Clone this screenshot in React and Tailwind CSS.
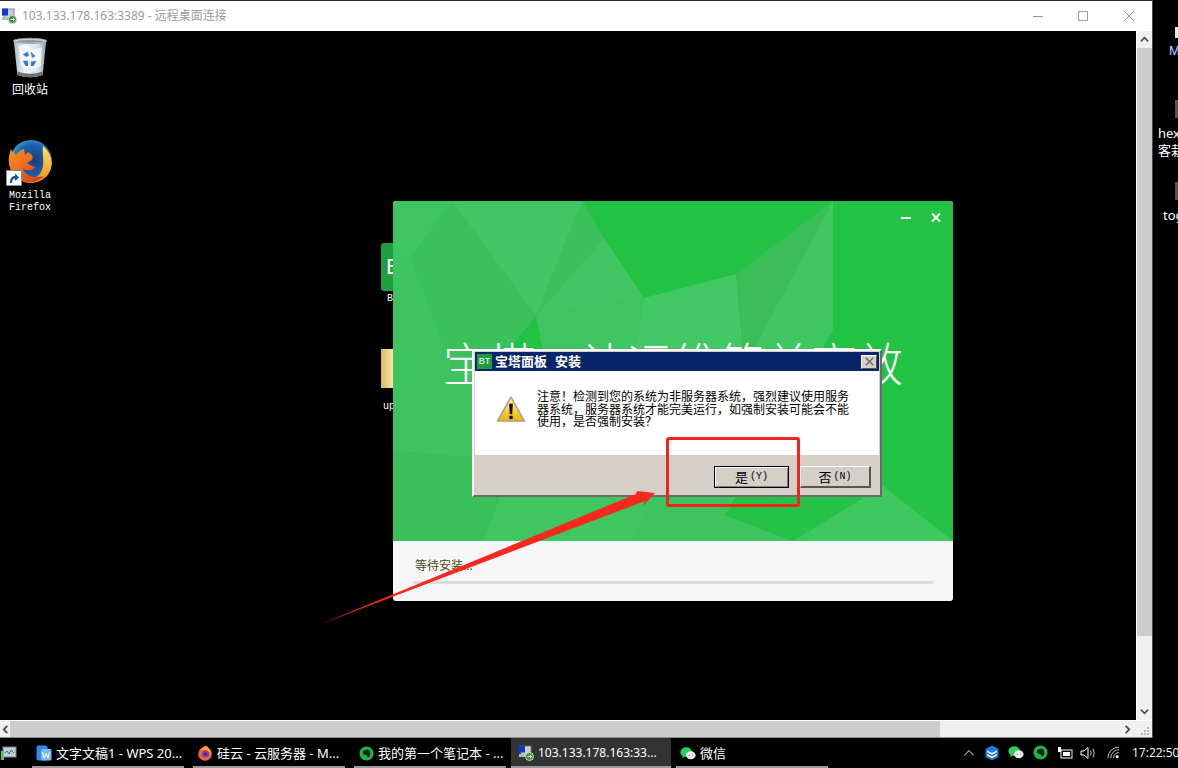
import React from "react";

const cjk = "font-['Noto_Sans','Noto_Sans_CJK_SC',sans-serif]";

const RdpIcon = ({ className }) => (
  <svg viewBox="0 0 16 16" className={className}>
    <rect x="3" y="1" width="10" height="9" fill="#c9ced6" stroke="#6f7680" strokeWidth="0.8" />
    <rect x="1" y="0.5" width="6" height="7" fill="#1238c8" />
    <rect x="1" y="9" width="9" height="3" fill="#b4bac2" />
    <circle cx="11.5" cy="11.5" r="4" fill="#3d8f3d" stroke="#d9e8d9" strokeWidth="0.8" />
    <path d="M9.5 11.5h4M12 10l1.5 1.5L12 13" stroke="#fff" strokeWidth="0.8" fill="none" />
  </svg>
);

const RecycleBin = () => (
  <svg viewBox="0 0 40 48" className="w-[36px] h-[44px]">
    <defs>
      <linearGradient id="binBody" x1="0" x2="1" y1="0" y2="0">
        <stop offset="0" stopColor="#a9bac4" />
        <stop offset="0.35" stopColor="#eef4f7" />
        <stop offset="0.75" stopColor="#d8e3ea" />
        <stop offset="1" stopColor="#8fa1ab" />
      </linearGradient>
    </defs>
    <path d="M2 5 L6 43 Q20 48 34 43 L38 5 Z" fill="url(#binBody)" />
    <ellipse cx="20" cy="5" rx="18.5" ry="3" fill="#c7d2d9" stroke="#8d9aa2" strokeWidth="0.8" />
    <ellipse cx="20" cy="5.5" rx="15" ry="1.5" fill="#8795a0" />
    <path d="M7 11 L15 9 L24 15 L33 12 L32 33 L22 37 L10 33 Z" fill="#f6fafc" opacity="0.8" />
    <path d="M12 20 l5 -3 l2 4 l-3 2 Z M21 17 l5 5 l-4 2 Z M12 27 l6 0 l0 6 l-3 0 Z M21 28 l6 -1 l-3 6 l-3 0 Z" fill="#3a78d8" />
    <path d="M6 39 Q20 44 34 39 L34 43 Q20 48 6 43 Z" fill="#6b7378" />
  </svg>
);

const Firefox = () => (
  <svg viewBox="0 0 44 44" className="w-[44px] h-[44px]">
    <defs>
      <radialGradient id="ffGlobe" cx="0.55" cy="0.5" r="0.6">
        <stop offset="0" stopColor="#173a86" />
        <stop offset="0.65" stopColor="#1c62aa" />
        <stop offset="1" stopColor="#46b1dc" />
      </radialGradient>
      <linearGradient id="ffFox" x1="0" x2="1" y1="0" y2="1">
        <stop offset="0" stopColor="#f8981f" />
        <stop offset="0.6" stopColor="#ea5c1a" />
        <stop offset="1" stopColor="#c9321c" />
      </linearGradient>
      <linearGradient id="ffTail" x1="0" x2="0" y1="0" y2="1">
        <stop offset="0" stopColor="#ffe65a" />
        <stop offset="1" stopColor="#f28a1d" />
      </linearGradient>
    </defs>
    <circle cx="23" cy="21" r="21" fill="url(#ffGlobe)" />
    <path d="M35 6 C44 13 47 27 39 36 C32 43 22 45 14 41 C25 42 34 35 35 26 C36 18 34 12 35 6 Z" fill="url(#ffTail)" />
    <path d="M3 9 C0 17 -1 27 6 35 C13 44 28 45 36 36 C27 39 17 36 15 29 C19 31 25 31 27 27 C23 26 20 24 19 22 C23 22 26 19 24 15 L20 12 L17 15 L16 9 C12 10 9 13 8 15 C7 13 4 12 3 9 Z" fill="url(#ffFox)" />
  </svg>
);

const ShortcutBadge = () => (
  <div className="absolute left-[-2px] top-[30px] w-[16px] h-[16px] bg-white border border-[#8a8a8a] flex items-center justify-center">
    <svg viewBox="0 0 12 12" className="w-[12px] h-[12px]">
      <path d="M2 11 C2 6 4 4 7 4 L7 1.5 L11 5.5 L7 9 L7 6.5 C5 6.5 4 8 4 11 Z" fill="#1b4f9c" />
    </svg>
  </div>
);

const WarningIcon = () => (
  <svg viewBox="0 0 30 28" className="w-[30px] h-[27px]">
    <defs>
      <linearGradient id="warnFill" x1="0" x2="0" y1="0" y2="1">
        <stop offset="0" stopColor="#fff3a0" />
        <stop offset="1" stopColor="#f0b400" />
      </linearGradient>
    </defs>
    <path d="M15 1 L29 26 H1 Z" fill="url(#warnFill)" stroke="#9a9a9a" strokeWidth="1.4" strokeLinejoin="round" />
    <path d="M13 8 h4 l-0.8 11 h-2.4 Z" fill="#111" />
    <rect x="13.3" y="20.5" width="3.4" height="3.4" fill="#111" />
  </svg>
);

const WpsIcon = () => (
  <svg viewBox="0 0 16 16" className="w-[16px] h-[16px]">
    <rect x="0.5" y="0.5" width="11" height="15" rx="2" fill="#2f8bf0" />
    <rect x="5" y="4" width="10.5" height="11.5" rx="1.5" fill="#7ab8f7" />
    <path d="M6.5 7 l1.5 6 l2 -4.5 l2 4.5 l1.5 -6" stroke="#fff" strokeWidth="1" fill="none" />
  </svg>
);

const FirefoxSmall = () => (
  <svg viewBox="0 0 16 16" className="w-[16px] h-[16px]">
    <circle cx="8" cy="9" r="6.8" fill="#f0642e" />
    <path d="M3 5 C5 2 9 1 9 0.5 C12 3 14 5 14.8 9 C11 5 7 4 3 5 Z" fill="#ffa02a" />
    <circle cx="8.5" cy="9" r="3.6" fill="#7a3bc8" />
    <circle cx="8.5" cy="9" r="1.6" fill="#3a2a8c" />
  </svg>
);

const EvernoteIcon = ({ className }) => (
  <svg viewBox="0 0 16 16" className={className}>
    <circle cx="8" cy="8" r="7.5" fill="#1fb83f" />
    <path d="M5 5 L8 3.8 C11 3.8 12 5 12 8 C12 11 11 12 9.5 12 C8 12 8 10.5 9.5 10.5 L7 9.5 C5 9.5 4 8 4 6 Z" fill="#16241a" />
  </svg>
);

const WechatIcon = ({ className }) => (
  <svg viewBox="0 0 18 16" className={className}>
    <ellipse cx="7" cy="6.5" rx="6.5" ry="5.5" fill="#2bd15c" />
    <path d="M3 10 L2.5 13 L6 11 Z" fill="#2bd15c" />
    <ellipse cx="12.2" cy="10" rx="5.3" ry="4.5" fill="#f1f1f1" />
    <circle cx="10.5" cy="10" r="0.8" fill="#999" />
    <circle cx="14" cy="10" r="0.8" fill="#999" />
  </svg>
);

const BoxIcon = () => (
  <svg viewBox="0 0 16 18" className="w-[14px] h-[16px]">
    <path d="M8 0.5 L15.5 4.5 V13.5 L8 17.5 L0.5 13.5 V4.5 Z" fill="#1f7be0" />
    <path d="M2.5 6 L8 9 L13.5 6 L13.5 8 L8 11 L2.5 8 Z" fill="#fff" />
    <path d="M2.5 10 L8 13 L13.5 10 L13.5 12 L8 15 L2.5 12 Z" fill="#fff" />
  </svg>
);

const TaskItem = ({ icon, label, active, w = "w-[152px]", mr = "mr-[9px]", pl = "pl-[4px]", text = "text-[13px]" }) => (
  <div className={`${w} ${mr} ${pl} h-[30px] relative flex items-center gap-[4px] shrink-0 ${active ? "bg-[#333333]" : ""}`}>
    <span className="w-[16px] h-[16px] shrink-0 flex items-center justify-center">{icon}</span>
    <span className={`${cjk} ${text} leading-[18px] text-white whitespace-nowrap`}>{label}</span>
    <div className="absolute left-0 right-0 bottom-0 h-[2px] bg-[#9a9a9a]" />
  </div>
);

// low poly shards behind the installer title
const InstallerBackdrop = () => (
  <svg viewBox="0 0 560 340" className="absolute inset-0 w-full h-full" preserveAspectRatio="none">
    <rect width="560" height="340" fill="#22c245" />
    <polygon points="0,0 59,0 18,57 0,70" fill="#3fc560" />
    <polygon points="59,0 189,0 143,115" fill="#41c663" />
    <polygon points="189,0 211,37 143,115" fill="#3cc05b" />
    <polygon points="211,37 251,97 143,115" fill="#40c562" />
    <polygon points="59,0 143,115 114,150 60,170 18,57" fill="#3bc15b" />
    <polygon points="0,70 18,57 60,170 0,250" fill="#3ec45f" />
    <polygon points="143,115 251,97 243,150 150,150" fill="#3fc560" />
    <polygon points="251,97 343,73 350,150 300,210 243,150" fill="#42c865" />
    <polygon points="343,73 440,0 361,147 350,150" fill="#3bbd58" />
    <polygon points="440,0 440,129 361,147" fill="#3fc660" />
    <polygon points="60,170 114,150 150,150 120,260 0,250 0,250" fill="#3ec35e" />
    <polygon points="150,150 243,150 300,210 240,340 90,340 120,260" fill="#40c660" />
    <polygon points="0,250 120,260 90,340 0,340" fill="#39c059" />
    <polygon points="300,210 350,150 361,147 332,314 400,340 240,340" fill="#3ec45e" />
    <polygon points="361,147 440,129 332,314" fill="#3fc75f" />
    <polygon points="332,314 400,340 560,340 560,270 490,270" fill="#24c247" />
    <polygon points="400,340 490,285 560,340" fill="#3fc85f" />
  </svg>
);

const Installer = () => (
  <div className="absolute left-[393px] top-[201px] w-[560px] h-[400px] rounded-[3px] overflow-hidden bg-[#f6f6f6]">
    <div className="relative h-[340px] overflow-hidden">
      <InstallerBackdrop />
      <svg viewBox="0 0 50 14" className="absolute right-[10px] top-[11px] w-[50px] h-[14px]">
        <rect x="8" y="5" width="10" height="2" fill="#fff" />
        <path d="M39 1.5 L47 9.5 M47 1.5 L39 9.5" stroke="#fff" strokeWidth="2" />
      </svg>
      <div className={`${cjk} absolute left-[50px] top-[132px] text-[46px] leading-[60px] font-light text-white whitespace-nowrap`}>
        宝塔，让运维简单高效
      </div>
    </div>
    <div className="px-[20px] pt-[16px]">
      <div className={`${cjk} text-[12px] leading-[18px] text-[#4c4a12] pl-[2px]`}>等待安装...</div>
      <div className="h-[3px] bg-[#dcdcdc] mt-[6px]" />
    </div>
  </div>
);

const AlertButton = ({ label, hot, focused }) => (
  <div
    className={`${cjk} h-[22px] flex items-center justify-center text-[12px] text-black bg-[#d4d0c8] ${
      focused
        ? "w-[75px] border border-black shadow-[inset_1px_1px_0_#fff,inset_-1px_-1px_0_#808080]"
        : "w-[71px] border-t border-l border-white border-b-2 border-r-2 border-b-[#555555] border-r-[#555555]"
    }`}
  >
    <span className="text-[13px] leading-[16px]">{label}</span>
    <span className="font-['Liberation_Mono',monospace] text-[10px] leading-[16px] ml-[2px]">{hot}</span>
  </div>
);

const AlertDialog = () => (
  <div className="absolute left-[472px] top-[349px] w-[410px] h-[148px] bg-[#d4d0c8] border-2 border-t-white border-l-white border-r-[#6b6b6b] border-b-[#6b6b6b] p-[1px] flex flex-col">
    <div className="h-[19px] bg-[#0a246a] flex items-center pl-[2px] pr-[2px] shrink-0">
      <div className="w-[15px] h-[15px] bg-[#1f9e3f] text-white text-[9px] leading-[15px] text-center font-['Liberation_Sans',sans-serif]">BT</div>
      <span className={`${cjk} text-[13px] leading-[15px] font-bold text-white ml-[3px] whitespace-nowrap`}>宝塔面板</span>
      <span className={`${cjk} text-[13px] leading-[15px] font-bold text-white ml-[8px] whitespace-nowrap`}>安装</span>
      <div className="ml-auto w-[16px] h-[14px] bg-[#d4d0c8] border-t border-l border-white border-b border-r border-b-[#555555] border-r-[#555555] flex items-center justify-center">
        <svg viewBox="0 0 10 10" className="w-[9px] h-[9px]">
          <path d="M1 1 L9 9 M9 1 L1 9" stroke="#666" strokeWidth="1.5" />
        </svg>
      </div>
    </div>
    <div className="h-[84px] bg-white flex items-start pl-[21px] pt-[20px] shrink-0">
      <div className="pt-[5px] shrink-0"><WarningIcon /></div>
      <div className={`${cjk} ml-[11px] w-[316px] text-[12px] leading-[12.5px] text-black`}>
        注意！检测到您的系统为非服务器系统，强烈建议使用服务器系统，服务器系统才能完美运行，如强制安装可能会不能使用，是否强制安装？
      </div>
    </div>
    <div className="flex-1 flex items-start justify-end gap-[11px] pt-[11px] pr-[8px]">
      <AlertButton label="是" hot="(Y)" focused />
      <AlertButton label="否" hot="(N)" />
    </div>
  </div>
);

const Annotations = () => (
  <>
    <div className="absolute left-[666px] top-[437px] w-[134px] h-[70px] border-[3px] border-[#f5231c] rounded-[3px]" />
    <svg viewBox="0 0 1178 768" className="absolute inset-0 w-[1178px] h-[768px] pointer-events-none">
      <polygon points="321,624 636,494 637,491 655,493 643,506 645,501" fill="#f7291f" />
    </svg>
  </>
);

const DesktopIcons = () => (
  <>
    <div className="absolute left-0 top-[36px] w-[60px] flex flex-col items-center">
      <RecycleBin />
      <span className={`${cjk} text-[12px] leading-[16px] text-white mt-[2px]`}>回收站</span>
    </div>
    <div className="absolute left-[8px] top-[140px] w-[44px] h-[44px]">
      <Firefox />
      <ShortcutBadge />
    </div>
    <div className="absolute left-[9px] top-[190px] font-['Liberation_Mono',monospace] text-[10px] leading-[12px] text-white">
      Mozilla<br />Firefox
    </div>
    <div className="absolute left-[381px] top-[243px] w-[14px] h-[48px] bg-[#1f9e3f] rounded-l-[3px] overflow-hidden text-white text-[22px] leading-[48px] pl-[5px] font-['Liberation_Sans',sans-serif]">B</div>
    <div className="absolute left-[387px] top-[293px] text-[10px] leading-[12px] text-white font-['Liberation_Mono',monospace]">B</div>
    <div className="absolute left-[381px] top-[349px] w-[14px] h-[39px] bg-gradient-to-r from-[#d9b860] to-[#fff2b8]" />
    <div className="absolute left-[383px] top-[401px] text-[10px] leading-[12px] text-white font-['Liberation_Mono',monospace]">up</div>
  </>
);

const ScrollArrow = ({ d, className }) => (
  <svg viewBox="0 0 10 10" className={className}>
    <path d={d} stroke="#505050" strokeWidth="2" fill="none" />
  </svg>
);

const RdpWindow = () => (
  <div className="w-[1152px] h-[738px] flex flex-col bg-[#f0f0f0] shrink-0 border-t border-b border-t-[#2b2b2b] border-b-[#8a8a8a]">
    <div className="h-[30px] bg-white flex items-center shrink-0">
      <RdpIcon className="w-[16px] h-[16px] ml-[1px]" />
      <span className={`${cjk} text-[12px] leading-[16px] text-[#9b9b9b] ml-[5px] whitespace-nowrap`}>103.133.178.163:3389 - 远程桌面连接</span>
      <div className="ml-auto flex items-center h-full">
        <svg viewBox="0 0 150 30" className="w-[150px] h-[30px]">
          <path d="M31 15.5 H41" stroke="#9a9a9a" strokeWidth="1" />
          <rect x="76.5" y="10.5" width="9" height="9" fill="none" stroke="#9a9a9a" strokeWidth="1" />
          <path d="M122 10 L132 20 M132 10 L122 20" stroke="#9a9a9a" strokeWidth="1" />
        </svg>
      </div>
    </div>
    <div className="flex-1 flex min-h-0">
      <div className="flex-1 bg-black" />
      <div className="w-[16px] flex flex-col bg-[#f0f0f0] border-l border-white">
        <div className="h-[17px] flex items-center justify-center"><ScrollArrow d="M1 7 L5 3 L9 7" className="w-[9px] h-[9px]" /></div>
        <div className="h-[588px] bg-[#cdcdcd]" />
        <div className="flex-1" />
        <div className="h-[17px] flex items-center justify-center"><ScrollArrow d="M1 3 L5 7 L9 3" className="w-[9px] h-[9px]" /></div>
      </div>
    </div>
    <div className="h-[17px] flex bg-[#f0f0f0] border-t border-white shrink-0">
      <div className="w-[10px] flex items-center justify-center"><ScrollArrow d="M7 1 L3 5 L7 9" className="w-[9px] h-[9px]" /></div>
      <div className="w-[930px] bg-[#cdcdcd]" />
      <div className="flex-1" />
      <div className="w-[13px] flex items-center"><ScrollArrow d="M3 1 L7 5 L3 9" className="w-[9px] h-[9px]" /></div>
      <div className="w-[16px] flex items-end justify-end pb-[2px] pr-[3px]">
        <svg viewBox="0 0 8 8" className="w-[8px] h-[8px]">
          <path d="M6 0h2v2h-2zM3 3h2v2h-2zM6 3h2v2h-2zM0 6h2v2h-2zM3 6h2v2h-2zM6 6h2v2h-2z" fill="#b8b8b8" />
        </svg>
      </div>
    </div>
  </div>
);

const SideStrip = () => (
  <div className="flex-1 relative bg-black overflow-hidden border-l border-[#4a4a4a]">
    <div className="absolute left-[22px] top-[27px] w-[6px] h-[11px] bg-[#e8e8e8]" />
    <div className="absolute left-[16px] top-[43px] font-['Liberation_Sans',sans-serif] text-[13px] leading-[16px] text-[#b9d4ff]">M</div>
    <div className="absolute left-[22px] top-[100px] w-[6px] h-[18px] bg-[#555555]" />
    <div className={`${cjk} absolute left-[5px] top-[125px] text-[13px] leading-[16px] text-white whitespace-nowrap`}>hex</div>
    <div className={`${cjk} absolute left-[5px] top-[142px] text-[13px] leading-[16px] text-white whitespace-nowrap`}>客栽</div>
    <div className="absolute left-[22px] top-[182px] w-[6px] h-[18px] bg-[#555555]" />
    <div className={`${cjk} absolute left-[10px] top-[207px] text-[13px] leading-[16px] text-white whitespace-nowrap`}>tog</div>
  </div>
);

const Taskbar = () => (
  <div className="h-[30px] bg-black flex items-center overflow-hidden">
    <div className="w-[32px] shrink-0 pl-[1px]">
      <svg viewBox="0 0 16 16" className="w-[16px] h-[16px]">
        <rect x="2" y="2" width="13" height="10" fill="#c5cdd4" stroke="#7b8a94" />
        <path d="M4 8 L6 6 L8 9 L10 5 L13 8" stroke="#2f6fb5" fill="none" />
        <rect x="0" y="6" width="3" height="9" fill="#55c46a" />
      </svg>
    </div>
    <TaskItem icon={<WpsIcon />} label="文字文稿1 - WPS 20..." />
    <TaskItem icon={<FirefoxSmall />} label="硅云 - 云服务器 - M..." />
    <TaskItem icon={<EvernoteIcon className="w-[15px] h-[15px]" />} label="我的第一个笔记本 - ..." mr="mr-[5px]" />
    <TaskItem icon={<RdpIcon className="w-[16px] h-[16px]" />} label="103.133.178.163:33..." w="w-[160px]" mr="mr-[5px]" pl="pl-[7px]" text="text-[12px]" active />
    <TaskItem icon={<WechatIcon className="w-[16px] h-[15px]" />} label="微信" />
    <div className="flex items-center h-full pl-[126px] pb-[1px] shrink-0">
      <svg viewBox="0 0 14 10" className="w-[12px] h-[8px]">
        <path d="M1 8 L7 2 L13 8" stroke="#fff" strokeWidth="1.2" fill="none" />
      </svg>
      <div className="ml-[10px]"><BoxIcon /></div>
      <div className="ml-[9px]"><WechatIcon className="w-[16px] h-[15px]" /></div>
      <div className="ml-[9px]"><EvernoteIcon className="w-[15px] h-[15px]" /></div>
      <svg viewBox="0 0 16 12" className="w-[16px] h-[12px] ml-[9px]">
        <rect x="4" y="3" width="11" height="8" fill="none" stroke="#fff" />
        <rect x="6" y="5" width="7" height="4" fill="#fff" />
        <rect x="1" y="0" width="3" height="5" fill="#fff" />
      </svg>
      <svg viewBox="0 0 16 14" className="w-[16px] h-[14px] ml-[7px]">
        <path d="M1 5 H4 L8 1.5 V12.5 L4 9 H1 Z" fill="none" stroke="#fff" />
        <path d="M10.5 4.5 Q12 7 10.5 9.5 M13 2.5 Q15.5 7 13 11.5" fill="none" stroke="#c8c8c8" />
      </svg>
      <svg viewBox="0 0 14 14" className="w-[13px] h-[13px] ml-[11px]">
        <path d="M1 13 A12 12 0 0 1 13 1 M4 13 A9 9 0 0 1 13 4 M7 13 A6 6 0 0 1 13 7" fill="none" stroke="#cfcfcf" />
        <circle cx="11" cy="11.5" r="1.6" fill="#fff" />
      </svg>
      <span className="ml-[12px] font-['Open_Sans',sans-serif] text-[12px] leading-[18px] text-white whitespace-nowrap">17:22:50</span>
    </div>
  </div>
);

export default function App() {
  return (
    <div className="relative w-[1178px] h-[768px] bg-black overflow-hidden">
      <div className="flex h-[738px]">
        <RdpWindow />
        <SideStrip />
      </div>
      <Taskbar />
      <DesktopIcons />
      <Installer />
      <AlertDialog />
      <Annotations />
    </div>
  );
}
